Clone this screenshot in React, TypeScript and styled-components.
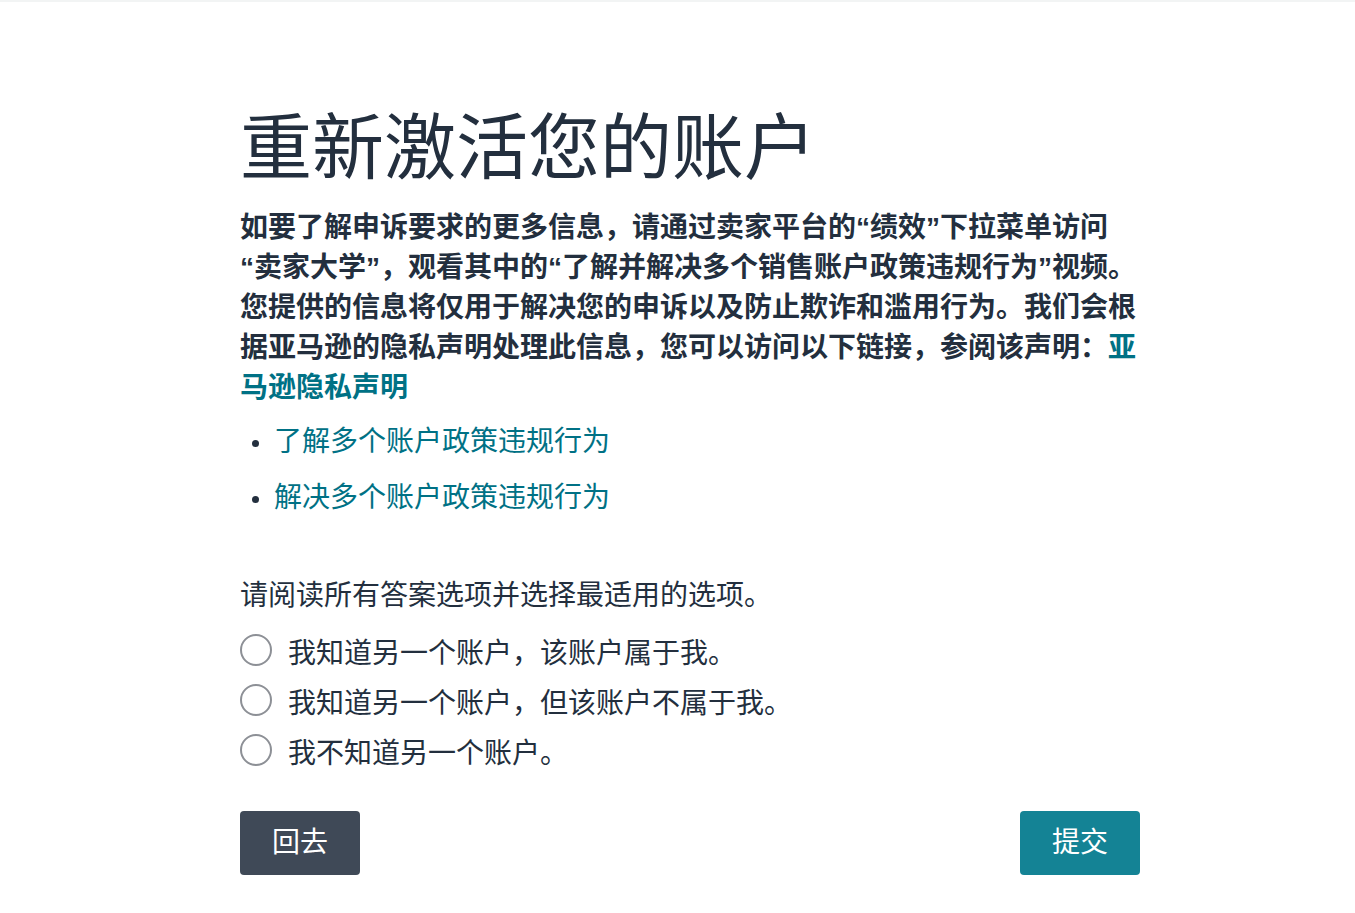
import React from "react";
import styled, { createGlobalStyle } from "styled-components";

const FONT = `"Liberation Sans", "Noto Sans CJK SC", sans-serif`;

const Global = createGlobalStyle`
  html, body { margin: 0; padding: 0; background: #fff; }
  body {
    font-family: ${FONT};
    color: #232f3e;
    border-top: 2px solid #f2f4f4;
  }
  * { box-sizing: border-box; }
`;

const Page = styled.main`
  padding: 103px 0 40px 240px;
`;

const Column = styled.div`
  width: 900px;
  display: flex;
  flex-direction: column;
`;

const Title = styled.h1`
  margin: 0;
  font-size: 72px;
  line-height: 86px;
  font-weight: 400;
  color: #232f3e;
`;

const Intro = styled.p`
  margin: 17px 0 0;
  font-size: 28px;
  line-height: 40px;
  font-weight: 700;
  color: #232f3e;
`;

const Link = styled.a<{ $bold?: boolean }>`
  color: #007185;
  text-decoration: none;
  font-weight: ${(p) => (p.$bold ? 700 : 400)};
`;

const LinkList = styled.ul`
  list-style: none;
  margin: 14px 0 0;
  padding: 0;
  display: flex;
  flex-direction: column;
  gap: 16px;
`;

const LinkItem = styled.li`
  display: flex;
  align-items: center;
  font-size: 28px;
  line-height: 40px;
  padding-left: 12px;
  &::before {
    content: "";
    width: 7px;
    height: 7px;
    border-radius: 50%;
    background: #232f3e;
    margin-right: 15px;
    margin-top: 3px;
  }
`;

const Prompt = styled.p`
  margin: 58px 0 0;
  font-size: 28px;
  line-height: 40px;
  color: #232f3e;
`;

const Options = styled.div`
  margin-top: 13px;
  display: flex;
  flex-direction: column;
`;

const Option = styled.label`
  display: flex;
  align-items: center;
  gap: 16px;
  height: 50px;
  font-size: 28px;
  color: #232f3e;
  cursor: pointer;
`;

const Radio = styled.span`
  width: 32px;
  height: 32px;
  border-radius: 50%;
  border: 2px solid #8d9096;
  flex: none;
  margin-top: -8px;
`;

const OptionText = styled.span`
  line-height: 40px;
`;

const Actions = styled.div`
  margin-top: 32px;
  display: flex;
  justify-content: space-between;
`;

const Button = styled.button<{ $primary?: boolean }>`
  width: 120px;
  height: 64px;
  border: none;
  border-radius: 4px;
  background: ${(p) => (p.$primary ? "#148395" : "#3f4957")};
  color: #fff;
  font-family: ${FONT};
  font-size: 28px;
  line-height: 40px;
  cursor: pointer;
  padding: 0;
`;

const options = [
  "我知道另一个账户，该账户属于我。",
  "我知道另一个账户，但该账户不属于我。",
  "我不知道另一个账户。",
];

export default function App() {
  return (
    <>
      <Global />
      <Page>
        <Column>
          <Title>重新激活您的账户</Title>
          <Intro>
            如要了解申诉要求的更多信息，请通过卖家平台的<wbr />“绩效”下拉菜单访问<wbr />“卖家大学”，观看其中的<wbr />“了解并解决多个销售账户政策违规行为”视频。您提供的信息将仅用于解决您的申诉以及防止欺诈和滥用行为。我们会根据亚马逊的隐私声明处理此信息，您可以访问以下链接，参阅该声明：
            <Link $bold href="#">亚马逊隐私声明</Link>
          </Intro>
          <LinkList>
            <LinkItem>
              <Link href="#">了解多个账户政策违规行为</Link>
            </LinkItem>
            <LinkItem>
              <Link href="#">解决多个账户政策违规行为</Link>
            </LinkItem>
          </LinkList>
          <Prompt>请阅读所有答案选项并选择最适用的选项。</Prompt>
          <Options>
            {options.map((o) => (
              <Option key={o}>
                <Radio />
                <OptionText>{o}</OptionText>
              </Option>
            ))}
          </Options>
          <Actions>
            <Button>回去</Button>
            <Button $primary>提交</Button>
          </Actions>
        </Column>
      </Page>
    </>
  );
}
